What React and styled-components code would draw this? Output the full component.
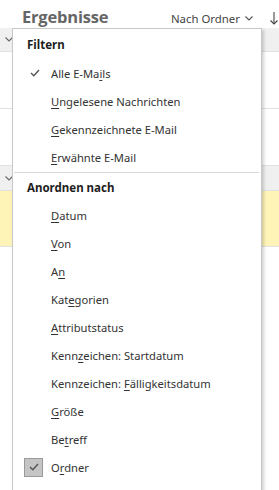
import React from "react";
import styled, { createGlobalStyle } from "styled-components";

const Global = createGlobalStyle`
  html, body { margin: 0; padding: 0; background: #fff; }
  body { font-family: "Noto Sans", "Open Sans", sans-serif; }
`;

const Page = styled.div`
  position: relative;
  width: 279px;
  height: 490px;
  overflow: hidden;
  background: #fff;
`;

const Header = styled.div`
  display: flex;
  align-items: center;
  height: 28px;
  padding-left: 22px;
  padding-right: 1px;
  box-sizing: border-box;
`;

const Title = styled.div`
  font-family: "Open Sans", sans-serif;
  font-weight: 700;
  font-size: 16.5px;
  color: #666;
  letter-spacing: -0.2px;
  flex: 1;
  margin-top: 5px;
`;

const SortButton = styled.div`
  display: flex;
  align-items: center;
  gap: 5px;
  font-size: 11.4px;
  color: #444;
  margin-top: 8px;
  margin-right: 17px;
`;

const ArrowDown = styled.div`
  display: flex;
  margin-top: 8px;
`;

const GroupHeader = styled.div`
  display: flex;
  align-items: center;
  height: ${(p) => p.$h}px;
  background: #f0f0f0;
  border-bottom: 1px solid #e1e1e1;
  padding-left: 5px;
  box-sizing: border-box;
`;

const Row = styled.div`
  height: ${(p) => p.$h}px;
  background: ${(p) => (p.$selected ? "#fff4b8" : "#fff")};
  border-bottom: 1px solid #e1e1e1;
  box-sizing: border-box;
`;

const Menu = styled.div`
  position: absolute;
  left: 12px;
  top: 28px;
  width: 250px;
  height: 480px;
  background: #fff;
  border: 1px solid #c8c8c8;
  box-shadow: 2px 2px 3px rgba(0, 0, 0, 0.18);
  box-sizing: border-box;
  display: flex;
  flex-direction: column;
`;

const SectionTitle = styled.div`
  display: flex;
  align-items: center;
  height: ${(p) => p.$h}px;
  padding-left: 14px;
  font-weight: 700;
  font-size: 11.5px;
  color: #1e1e1e;
`;

const Item = styled.div`
  display: grid;
  grid-template-columns: 38px 1fr;
  align-items: center;
  height: 28px;
  font-size: 11.2px;
  color: #333;
`;

const IconCell = styled.div`
  display: flex;
  align-items: center;
  padding-left: ${(p) => (p.$box ? 11 : 17)}px;
  height: 100%;
`;

const CheckBox = styled.div`
  width: 19px;
  height: 19px;
  box-sizing: border-box;
  background: #c5c5c5;
  border: 1px solid #9a9a9a;
  display: flex;
  align-items: center;
  justify-content: center;
`;

const Separator = styled.div`
  height: 1px;
  margin: 1px 2px 0 1px;
  background: #d9d9d9;
`;

const Key = styled.span`
  text-decoration: underline;
  text-underline-offset: 2px;
`;

const Check = () => (
  <svg width="10" height="8" viewBox="0 0 10 8">
    <polyline points="1,4 3.8,6.8 9,1" fill="none" stroke="#555" strokeWidth="1.4" />
  </svg>
);

const Chevron = ({ color = "#666" }) => (
  <svg width="8" height="5" viewBox="0 0 8 5">
    <polyline points="0.5,0.5 4,4 7.5,0.5" fill="none" stroke={color} strokeWidth="1.1" />
  </svg>
);

const Arrow = () => (
  <svg width="8" height="13" viewBox="0 0 8 13">
    <line x1="4" y1="0" x2="4" y2="12" stroke="#444" strokeWidth="1.1" />
    <polyline points="0.5,8.5 4,12 7.5,8.5" fill="none" stroke="#444" strokeWidth="1.1" />
  </svg>
);

const L = ({ pre = "", k, post = "" }) => (
  <span>
    {pre}
    <Key>{k}</Key>
    {post}
  </span>
);

const filterItems = [
  { label: <L pre="Alle E-Ma" k="i" post="ls" />, check: true },
  { label: <L k="U" post="ngelesene Nachrichten" /> },
  { label: <L k="G" post="ekennzeichnete E-Mail" /> },
  { label: <L k="E" post="rwähnte E-Mail" /> },
];

const sortItems = [
  { label: <L k="D" post="atum" /> },
  { label: <L k="V" post="on" /> },
  { label: <L pre="A" k="n" /> },
  { label: <L pre="Kat" k="e" post="gorien" /> },
  { label: <L k="A" post="ttributstatus" /> },
  { label: <L pre="Kenn" k="z" post="eichen: Startdatum" /> },
  { label: <L pre="Kennzeichen: " k="F" post="älligkeitsdatum" /> },
  { label: <L k="G" post="röße" /> },
  { label: <L pre="Be" k="t" post="reff" /> },
  { label: <L pre="O" k="r" post="dner" />, box: true },
];

export default function App() {
  return (
    <Page>
      <Global />
      <Header>
        <Title>Ergebnisse</Title>
        <SortButton>
          Nach Ordner <Chevron color="#555" />
        </SortButton>
        <ArrowDown>
          <Arrow />
        </ArrowDown>
      </Header>
      <GroupHeader $h={24}>
        <Chevron />
      </GroupHeader>
      <Row $h={57} />
      <Row $h={57} />
      <GroupHeader $h={25}>
        <Chevron />
      </GroupHeader>
      <Row $h={56} $selected />
      <Row $h={260} />

      <Menu>
        <SectionTitle $h={30}>Filtern</SectionTitle>
        {filterItems.map((it, i) => (
          <Item key={i}>
            <IconCell>{it.check ? <Check /> : null}</IconCell>
            {it.label}
          </Item>
        ))}
        <Separator />
        <SectionTitle $h={28}>Anordnen nach</SectionTitle>
        {sortItems.map((it, i) => (
          <Item key={i}>
            <IconCell $box={it.box}>
              {it.box ? (
                <CheckBox>
                  <Check />
                </CheckBox>
              ) : null}
            </IconCell>
            {it.label}
          </Item>
        ))}
      </Menu>
    </Page>
  );
}
